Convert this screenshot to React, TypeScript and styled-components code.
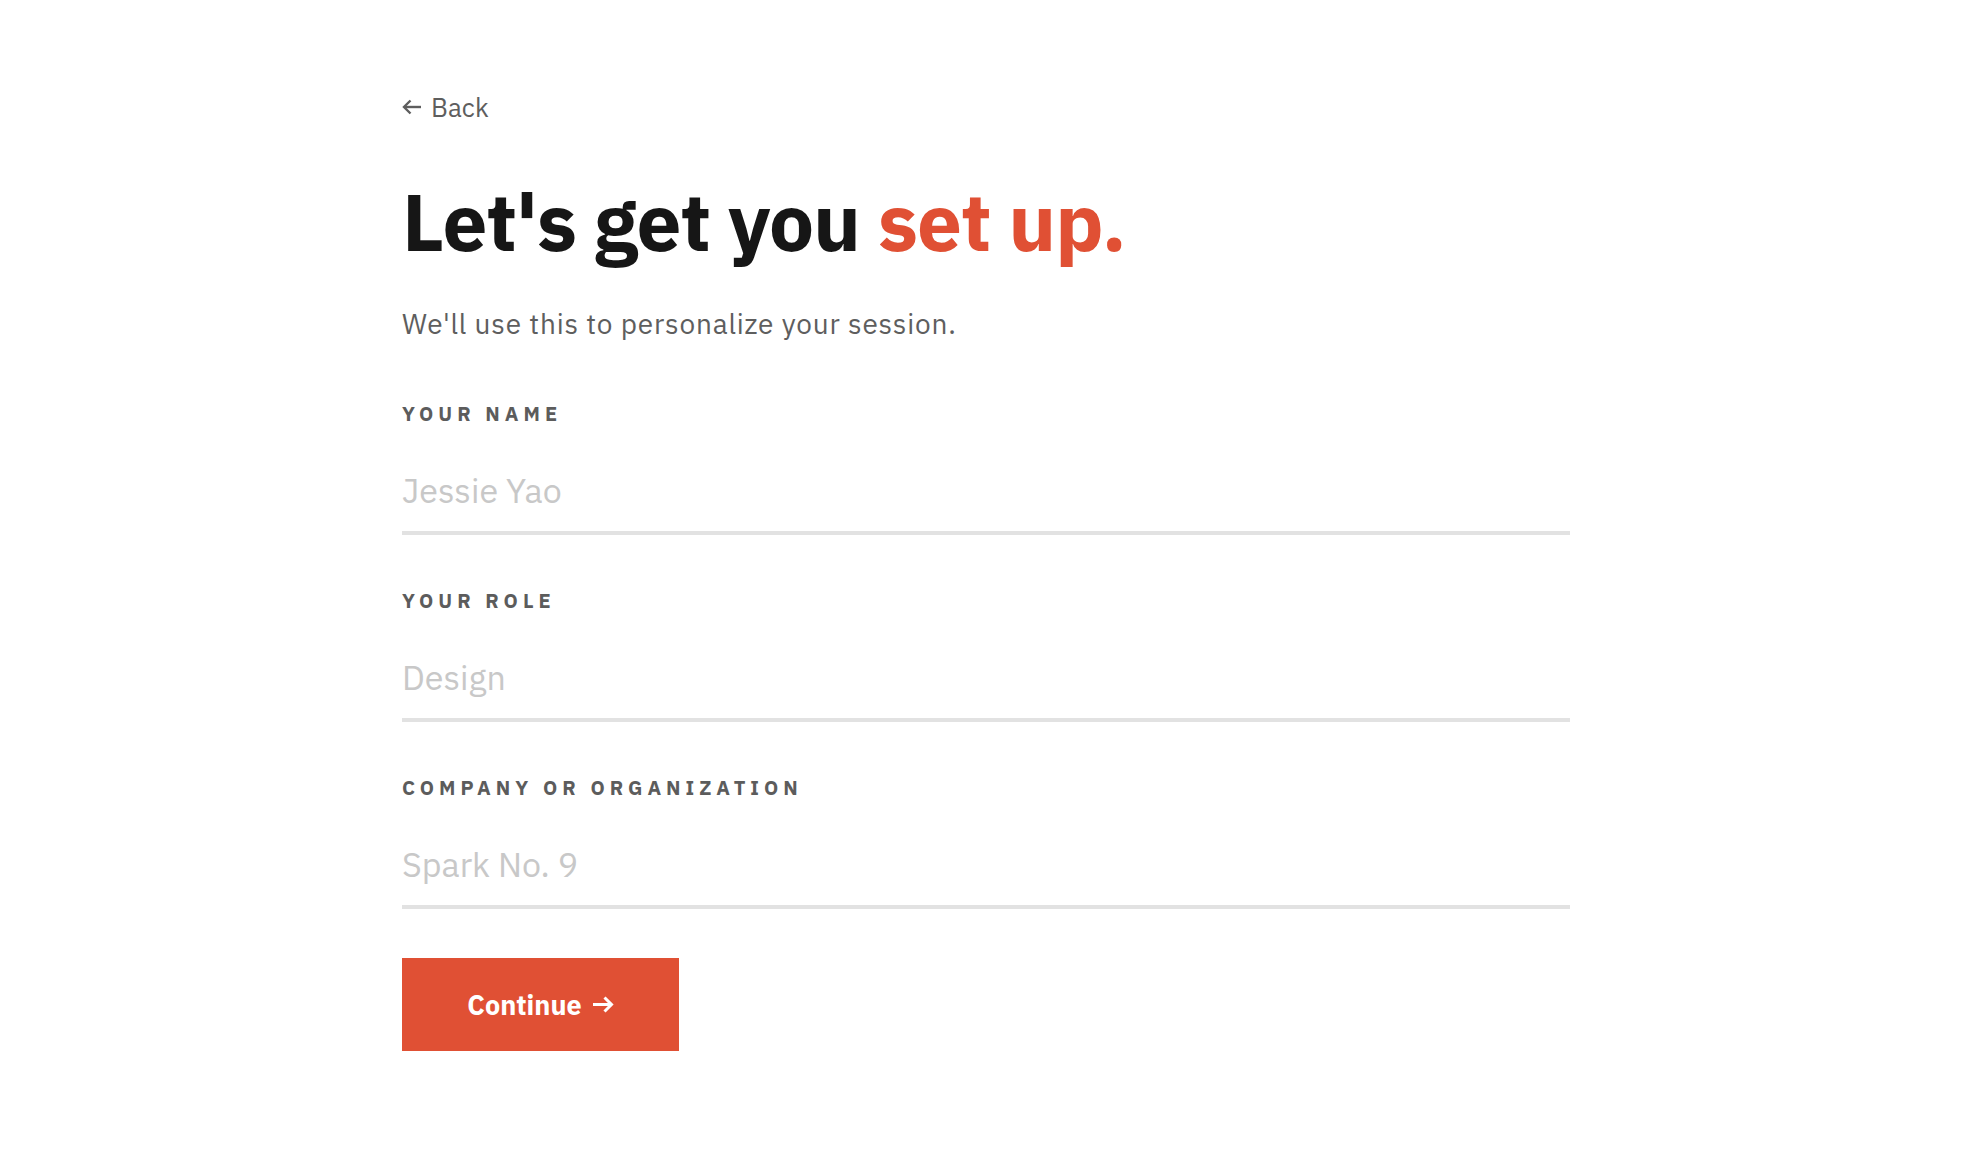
import React from 'react';
import styled, { createGlobalStyle } from 'styled-components';

const GlobalStyle = createGlobalStyle`
  * {
    box-sizing: border-box;
  }
  body {
    margin: 0;
    background: #ffffff;
    font-family: 'IBM Plex Sans', Roboto, 'Noto Sans', sans-serif;
    color: #161616;
  }
`;

const Page = styled.div`
  padding: 91px 0 80px 10px;
`;

const Container = styled.main`
  width: 1168px;
  margin: 0 auto;
  display: flex;
  flex-direction: column;
  align-items: flex-start;
`;

const BackLink = styled.a`
  display: inline-flex;
  align-items: center;
  gap: 9px;
  font-size: 26px;
  line-height: 32px;
  color: #5e5e5e;
  text-decoration: none;
  cursor: pointer;
`;

const Title = styled.h1`
  margin: 58px 0 0;
  font-size: 80px;
  line-height: 80px;
  font-weight: 700;
  letter-spacing: -1px;
  color: #161616;
`;

const Accent = styled.span`
  color: #e05034;
`;

const Subtitle = styled.p`
  margin: 47px 0 0;
  font-size: 28px;
  line-height: 32px;
  letter-spacing: 0.8px;
  color: #5e5e5e;
`;

const Form = styled.form`
  width: 100%;
  margin-top: 62px;
  display: flex;
  flex-direction: column;
  gap: 54px;
`;

const Field = styled.label`
  display: flex;
  flex-direction: column;
  gap: 43px;
`;

const FieldLabel = styled.span`
  font-size: 20px;
  line-height: 24px;
  font-weight: 700;
  letter-spacing: 5px;
  text-transform: uppercase;
  color: #5c5c5c;
`;

const Input = styled.input`
  width: 100%;
  height: 66px;
  padding: 0 0 20px;
  border: none;
  border-bottom: 4px solid #e2e2e2;
  outline: none;
  background: transparent;
  font-family: inherit;
  font-size: 34px;
  line-height: 42px;
  color: #161616;

  &::placeholder {
    color: #c8c8c8;
  }
`;

const Button = styled.button`
  margin-top: 49px;
  height: 93px;
  width: 277px;
  display: inline-flex;
  align-items: center;
  justify-content: center;
  gap: 10px;
  border: none;
  background: #e05034;
  color: #ffffff;
  font-family: inherit;
  font-size: 27px;
  font-weight: 700;
  cursor: pointer;
`;

const ArrowLeft = () => (
  <svg width="20" height="16" viewBox="0 0 20 16" fill="none" stroke="currentColor" strokeWidth="2.4">
    <path d="M19 8H2" />
    <path d="M8.5 1.5L2 8l6.5 6.5" />
  </svg>
);

const ArrowRight = () => (
  <svg width="22" height="17" viewBox="0 0 22 17" fill="none" stroke="currentColor" strokeWidth="3">
    <path d="M1 8.5h18.5" />
    <path d="M12.5 1.5l7 7-7 7" />
  </svg>
);

const fields = [
  { label: 'Your name', placeholder: 'Jessie Yao' },
  { label: 'Your role', placeholder: 'Design' },
  { label: 'Company or organization', placeholder: 'Spark No. 9' },
];

export default function App() {
  return (
    <>
      <GlobalStyle />
      <Page>
        <Container>
          <BackLink>
            <ArrowLeft />
            Back
          </BackLink>
          <Title>
            Let's get you <Accent>set up.</Accent>
          </Title>
          <Subtitle>We'll use this to personalize your session.</Subtitle>
          <Form onSubmit={(e) => e.preventDefault()}>
            {fields.map((f) => (
              <Field key={f.label}>
                <FieldLabel>{f.label}</FieldLabel>
                <Input placeholder={f.placeholder} />
              </Field>
            ))}
          </Form>
          <Button type="button">
            Continue
            <ArrowRight />
          </Button>
        </Container>
      </Page>
    </>
  );
}
